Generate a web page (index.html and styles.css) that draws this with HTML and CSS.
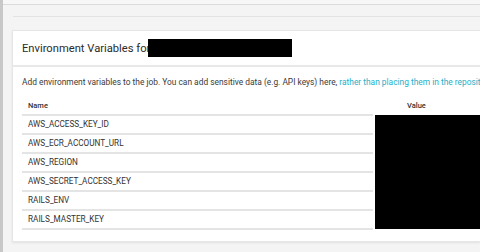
FILE: index.html
```html
<!DOCTYPE html>
<html lang="en">
<head>
    <meta charset="UTF-8">
    <title>Environment Variables</title>
    <link rel="stylesheet" href="styles.css">
</head>
<body>
    <div class="app">
        <div class="topbar"></div>
        <div class="main">
            <div class="subbar"></div>

            <!-- Environment variables card -->
            <div class="card">
                <div class="card-header">
                    <h2>Environment Variables for<span class="redact title-redact"></span></h2>
                </div>
                <div class="card-body">
                    <p class="intro">Add environment variables to the job. You can add sensitive data (e.g. API keys) here, <a href="#">rather than placing them in the repository.</a></p>

                    <div class="env-table">
                        <div class="th name-col">Name</div>
                        <div class="th value-col">Value</div>
                        <div class="td">AWS_ACCESS_KEY_ID</div>
                        <div class="redact values"></div>
                        <div class="td">AWS_ECR_ACCOUNT_URL</div>
                        <div class="td">AWS_REGION</div>
                        <div class="td">AWS_SECRET_ACCESS_KEY</div>
                        <div class="td">RAILS_ENV</div>
                        <div class="td">RAILS_MASTER_KEY</div>
                    </div>
                </div>
            </div>
        </div>
    </div>
</body>
</html>
```

FILE: styles.css
```css
body {
    margin: 0;
    padding: 0;
    font-family: Roboto, "Liberation Sans", sans-serif;
    background-color: #f4f4f4;
    color: #333;
    overflow: hidden;
}

.app {
    border-left: 3px solid #c8c8c8;
    height: 252px;
    box-sizing: border-box;
}

.topbar {
    height: 4px;
    border-bottom: 1px solid #dcdcdc;
    background-color: #f7f7f7;
}

.main {
    padding-left: 9px;
}

.subbar {
    height: 11px;
    border-bottom: 1px solid #e3e3e3;
    margin-left: 1px;
}

/* Card */
.card {
    margin-top: 13px;
    background-color: #fff;
    border: 1px solid #e6e6e6;
    border-right: none;
    box-shadow: 0 1px 2px rgba(0, 0, 0, 0.08);
    padding-bottom: 11px;
}

.card-header {
    height: 34px;
    border-bottom: 2px solid #e8e8e8;
    display: flex;
    align-items: center;
    padding-left: 9px;
}

.card-header h2 {
    margin: 0;
    font-size: 11.2px;
    font-weight: 400;
    color: #2b2b2b;
    display: flex;
    align-items: center;
    white-space: nowrap;
}

.redact {
    background-color: #000;
}

.title-redact {
    display: inline-block;
    width: 144px;
    height: 18px;
    margin-left: -2px;
}

.card-body {
    padding-left: 9px;
}

.intro {
    margin: 0;
    padding-top: 8px;
    height: 14px;
    line-height: 14px;
    font-size: 8.4px;
    color: #3a3a3a;
    white-space: nowrap;
}

.intro a {
    color: #1cb0c9;
    text-decoration: none;
}

/* Table */
.env-table {
    display: grid;
    grid-template-columns: 351px 1fr;
    grid-auto-rows: 19px;
    column-gap: 2px;
    margin-top: 8px;
}

.th {
    font-size: 7.5px;
    font-weight: 500;
    height: 19px;
    line-height: 19px;
}

.name-col {
    padding-left: 6px;
    border-bottom: 2px solid #e4e4e4;
    height: 17px;
    line-height: 17px;
}

.value-col {
    padding-left: 32px;
    line-height: 17px;
}

.td {
    grid-column: 1;
    font-size: 8.2px;
    padding-left: 6px;
    line-height: 17px;
    border-bottom: 2px solid #e4e4e4;
}

.values {
    grid-column: 2;
    grid-row: 2 / span 6;
    margin-top: -1px;
    margin-bottom: 1px;
}
```
